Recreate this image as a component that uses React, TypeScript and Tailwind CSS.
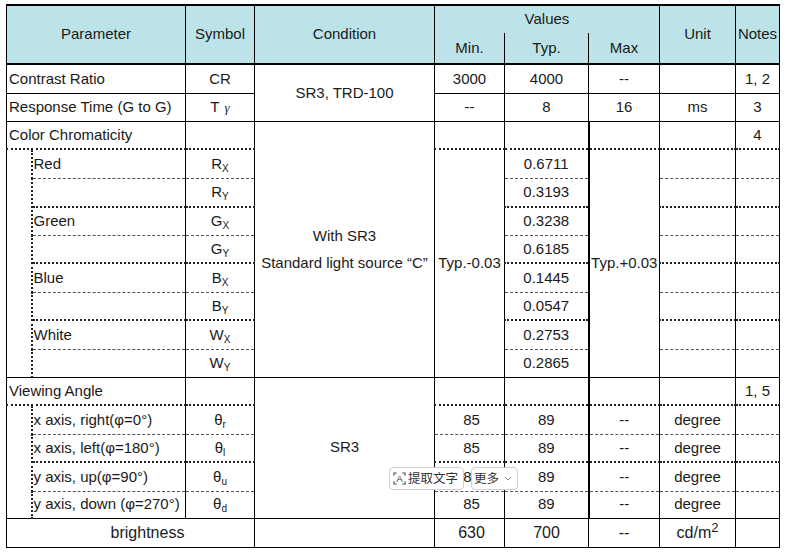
const B = 'border-b border-b-black';
const R = 'border-r border-r-black';
const BH = 'border-b-2 border-b-[#222] [border-bottom-style:dotted]';
const BF = 'border-b border-b-[#555] [border-bottom-style:dashed]';
const RT = 'border-r-2 border-r-black';
const IND = 'border-r-2 border-r-[#222] [border-right-style:dotted]';

const chroma = [
  { name: 'Red', sym: 'R', sub: 'X', typ: '0.6711', h: 'h-[29px]' },
  { name: '', sym: 'R', sub: 'Y', typ: '0.3193', h: 'h-[29px]' },
  { name: 'Green', sym: 'G', sub: 'X', typ: '0.3238', h: 'h-[28px]' },
  { name: '', sym: 'G', sub: 'Y', typ: '0.6185', h: 'h-[28px]' },
  { name: 'Blue', sym: 'B', sub: 'X', typ: '0.1445', h: 'h-[29px]' },
  { name: '', sym: 'B', sub: 'Y', typ: '0.0547', h: 'h-[28px]' },
  { name: 'White', sym: 'W', sub: 'X', typ: '0.2753', h: 'h-[29px]' },
  { name: '', sym: 'W', sub: 'Y', typ: '0.2865', h: 'h-[28px]' }
];

const angles = [
  { name: 'x axis, right(φ=0°)', sub: 'r', h: 'h-[29px]' },
  { name: 'x axis, left(φ=180°)', sub: 'l', h: 'h-[28px]' },
  { name: 'y axis, up(φ=90°)', sub: 'u', h: 'h-[29px]' },
  { name: 'y axis, down (φ=270°)', sub: 'd', h: 'h-[27px]' }
];

// alternating line weight: x/y split is fine, group boundary is heavy
const chromaBottom = (i: number) => (i === 7 ? B : i % 2 === 0 ? BF : BH);
const angleBottom = (i: number) => (i === 3 ? B : i % 2 === 0 ? BF : BH);

const ScanIcon = () => (
  <svg width="13" height="13" viewBox="0 0 14 14" fill="none" className="shrink-0">
    <path d="M1 4V1h3M10 1h3v3M13 10v3h-3M4 13H1v-3" stroke="#444" strokeWidth="1.1" />
    <text x="7" y="11" fontSize="10" textAnchor="middle" fill="#333" fontFamily="Liberation Sans, sans-serif">
      A
    </text>
  </svg>
);

export default function App() {
  return (
    <div className="relative min-h-[553px] w-[787px] bg-white pl-[6px] pt-[4px] font-['Liberation_Sans',Arial,sans-serif] text-[15px] text-[#1a1a1a]">
      <table className="table-fixed border-collapse border-l border-t-2 border-black">
        <colgroup>
          <col className="w-[25px]" />
          <col className="w-[154px]" />
          <col className="w-[69px]" />
          <col className="w-[180px]" />
          <col className="w-[70px]" />
          <col className="w-[84px]" />
          <col className="w-[71px]" />
          <col className="w-[76px]" />
          <col className="w-[44px]" />
        </colgroup>
        <thead className="bg-[#bce4e8]">
          <tr className="h-[28px]">
            <th colSpan={2} rowSpan={2} className={`${R} border-b-2 border-b-black font-normal`}>
              Parameter
            </th>
            <th rowSpan={2} className={`${R} border-b-2 border-b-black font-normal`}>
              Symbol
            </th>
            <th rowSpan={2} className={`${R} border-b-2 border-b-black font-normal`}>
              Condition
            </th>
            <th colSpan={3} className={`${R} font-normal`}>
              Values
            </th>
            <th rowSpan={2} className={`${R} border-b-2 border-b-black font-normal`}>
              Unit
            </th>
            <th rowSpan={2} className={`${R} border-b-2 border-b-black font-normal`}>
              Notes
            </th>
          </tr>
          <tr className="h-[31px]">
            <th className={`${R} border-b-2 border-b-black font-normal`}>Min.</th>
            <th className={`${R} border-b-2 border-b-black font-normal`}>Typ.</th>
            <th className={`${R} border-b-2 border-b-black font-normal`}>Max</th>
          </tr>
        </thead>
        <tbody className="text-center">
          <tr className="h-[29px]">
            <td colSpan={2} className={`${R} ${B} pl-[2px] text-left`}>Contrast Ratio</td>
            <td className={`${R} ${B}`}>CR</td>
            <td rowSpan={2} className={`${R} ${B}`}>SR3, TRD-100</td>
            <td className={`${R} ${B}`}>3000</td>
            <td className={`${R} ${B}`}>4000</td>
            <td className={`${R} ${B}`}>--</td>
            <td className={`${R} ${B}`}></td>
            <td className={`${R} ${B}`}>1, 2</td>
          </tr>
          <tr className="h-[28px]">
            <td colSpan={2} className={`${R} ${B} pl-[2px] text-left`}>Response Time (G to G)</td>
            <td className={`${R} ${B}`}>
              T<span className="ml-[5px] font-['Liberation_Serif',serif] text-[13px] italic">γ</span>
            </td>
            <td className={`${R} ${B}`}>--</td>
            <td className={`${R} ${B}`}>8</td>
            <td className={`${R} ${B}`}>16</td>
            <td className={`${R} ${B}`}>ms</td>
            <td className={`${R} ${B}`}>3</td>
          </tr>
          <tr className="h-[28px]">
            <td colSpan={2} className={`${R} ${BH} pl-[2px] text-left`}>Color Chromaticity</td>
            <td className={`${R} ${BH}`}></td>
            <td rowSpan={9} className={`${R} ${B} leading-[27px]`}>
              With SR3
              <br />
              Standard light source “C”
            </td>
            <td className={`${R} ${BH}`}></td>
            <td className={`${RT} ${BH}`}></td>
            <td className={`${R} ${BH}`}></td>
            <td className={`${R} ${BH}`}></td>
            <td className={`${R} ${BH}`}>4</td>
          </tr>
          {chroma.map((c, i) => (
            <tr key={c.sym + c.sub} className={c.h}>
              {i === 0 && <td rowSpan={8} className={`${IND} ${B}`}></td>}
              <td className={`${R} ${chromaBottom(i)} pl-px text-left`}>{c.name}</td>
              <td className={`${R} ${chromaBottom(i)}`}>
                {c.sym}
                <sub className="bottom-[-0.3em] text-[10px]">{c.sub}</sub>
              </td>
              {i === 0 && (
                <td rowSpan={8} className={`${R} ${B}`}>
                  Typ.-0.03
                </td>
              )}
              <td className={`${RT} ${chromaBottom(i)}`}>{c.typ}</td>
              {i === 0 && (
                <td rowSpan={8} className={`${R} ${B}`}>
                  Typ.+0.03
                </td>
              )}
              <td className={`${R} ${chromaBottom(i)}`}></td>
              <td className={`${R} ${chromaBottom(i)}`}></td>
            </tr>
          ))}
          <tr className="h-[28px]">
            <td colSpan={2} className={`${R} ${BH} pl-[2px] text-left`}>Viewing Angle</td>
            <td className={`${R} ${BH}`}></td>
            <td rowSpan={5} className={`${R} ${B}`}>SR3</td>
            <td className={`${R} ${BH}`}></td>
            <td className={`${RT} ${BH}`}></td>
            <td className={`${R} ${BH}`}></td>
            <td className={`${R} ${BH}`}></td>
            <td className={`${R} ${BH}`}>1, 5</td>
          </tr>
          {angles.map((a, i) => (
            <tr key={a.sub} className={a.h}>
              {i === 0 && <td rowSpan={4} className={`${IND} ${B}`}></td>}
              <td className={`${R} ${angleBottom(i)} pl-px text-left`}>{a.name}</td>
              <td className={`${R} ${angleBottom(i)}`}>
                θ<sub className="bottom-[-0.3em] text-[10px]">{a.sub}</sub>
              </td>
              <td className={`${R} ${angleBottom(i)} pl-[4px]`}>85</td>
              <td className={`${RT} ${angleBottom(i)}`}>89</td>
              <td className={`${R} ${angleBottom(i)}`}>--</td>
              <td className={`${R} ${angleBottom(i)}`}>degree</td>
              <td className={`${R} ${angleBottom(i)}`}></td>
            </tr>
          ))}
          <tr className="h-[29px] text-[16px]">
            <td colSpan={3} className={`${R} ${B} pl-[34px]`}>brightness</td>
            <td className={`${R} ${B}`}></td>
            <td className={`${R} ${B} pl-[4px]`}>630</td>
            <td className={`${R} ${B}`}>700</td>
            <td className={`${R} ${B}`}>--</td>
            <td className={`${R} ${B}`}>
              cd/m<sup className="top-[-0.45em] text-[13px]">2</sup>
            </td>
            <td className={`${R} ${B}`}></td>
          </tr>
        </tbody>
      </table>

      <div className="absolute left-[389px] top-[467px] flex items-center font-['Noto_Sans_CJK_SC',sans-serif] text-[12.5px] leading-none text-[#333]">
        <div className="flex h-[23px] w-[75px] items-center gap-[2px] overflow-hidden rounded-[4px] border border-[#cfcfcf] bg-white pl-[3px]">
          <ScanIcon />
          <span className="whitespace-nowrap">提取文字</span>
        </div>
        <div className="ml-[7px] flex h-[23px] w-[47px] items-center gap-[5px] rounded-[4px] border border-[#cfcfcf] bg-white pl-[2px]">
          <span className="whitespace-nowrap">更多</span>
          <svg width="8" height="5" viewBox="0 0 8 5" fill="none">
            <path d="M1 1l3 3 3-3" stroke="#888" strokeWidth="1" />
          </svg>
        </div>
      </div>
    </div>
  );
}
